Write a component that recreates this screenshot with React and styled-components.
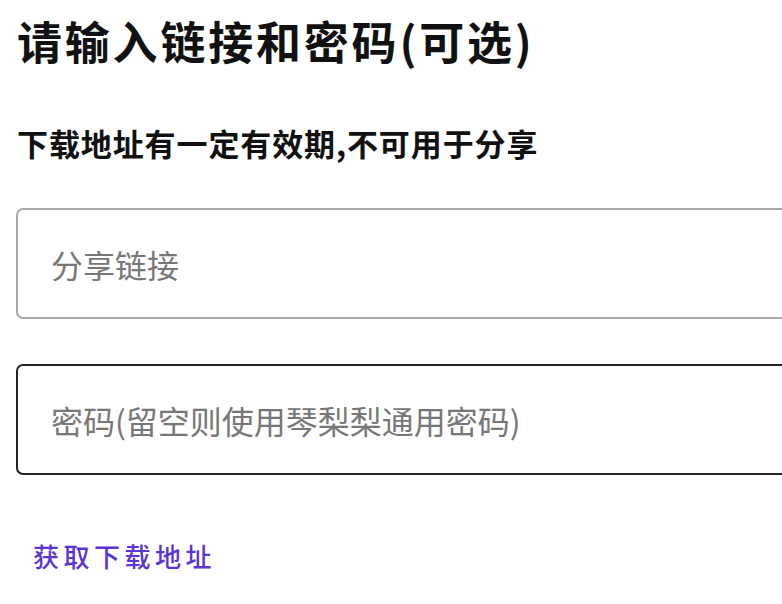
import React from 'react';
import styled, { createGlobalStyle } from 'styled-components';

const GlobalStyle = createGlobalStyle`
  html, body {
    margin: 0;
    padding: 0;
    background: #fff;
    overflow: hidden;
  }
  body {
    font-family: "Noto Sans CJK SC", "Noto Sans", sans-serif;
  }
`;

const Page = styled.div`
  display: flex;
  flex-direction: column;
  padding: 14px 0 0 16px;
  width: 820px;
`;

const Title = styled.h1`
  margin: 0;
  padding-left: 1px;
  font-size: 45px;
  line-height: 54px;
  font-weight: 700;
  letter-spacing: 2.8px;
  color: #111;
`;

const Hint = styled.p`
  margin: 55px 0 0;
  padding-left: 1px;
  font-size: 31px;
  line-height: 40px;
  font-weight: 700;
  letter-spacing: 0.9px;
  color: #111;
`;

const Field = styled.input`
  box-sizing: border-box;
  width: 820px;
  height: 111px;
  margin-top: ${(p) => p.$gap}px;
  padding: 0 0 0 33px;
  border: ${(p) => (p.$focused ? '2px solid #222' : '2px solid #a8a8a8')};
  border-radius: 7px;
  background: #fff;
  font-family: inherit;
  font-size: 32px;
  color: #222;
  outline: none;

  &::placeholder {
    color: #777;
  }
`;

const LinkButton = styled.button`
  align-self: flex-start;
  margin: 63px 0 0 17px;
  padding: 0;
  border: none;
  background: none;
  font-family: inherit;
  font-size: 26px;
  line-height: 36px;
  font-weight: 500;
  letter-spacing: 4.5px;
  color: #5b34d4;
  cursor: pointer;
`;

export default function App() {
  return (
    <>
      <GlobalStyle />
      <Page>
        <Title>请输入链接和密码(可选)</Title>
        <Hint>下载地址有一定有效期,不可用于分享</Hint>
        <Field $gap={45} placeholder="分享链接" />
        <Field $gap={45} $focused placeholder="密码(留空则使用琴梨梨通用密码)" />
        <LinkButton>获取下载地址</LinkButton>
      </Page>
    </>
  );
}
